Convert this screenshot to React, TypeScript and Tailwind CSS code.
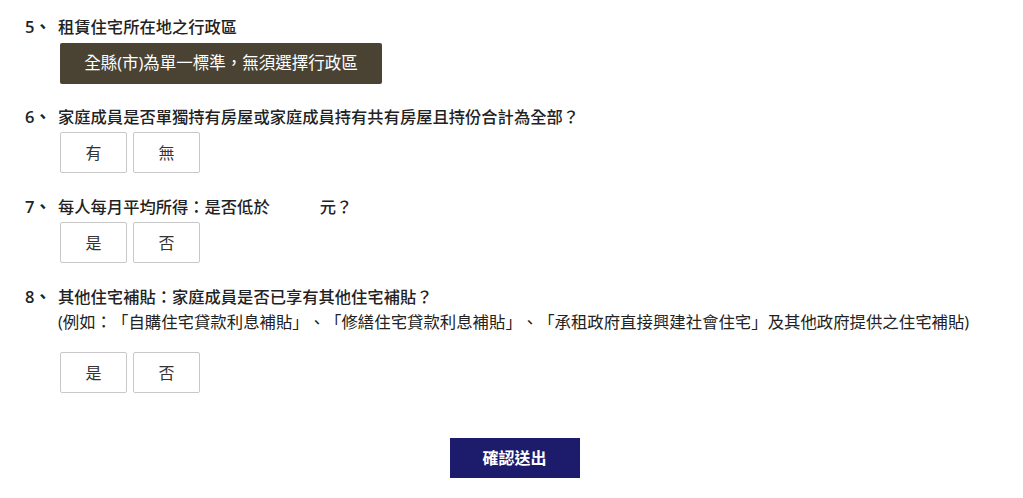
import React from 'react';

const font = "font-['Open_Sans','Noto_Sans_CJK_TC',sans-serif] [text-spacing-trim:space-all]";

const Choice = ({ label }: { label: string }) => (
  <button
    type="button"
    className="w-[67px] h-[41px] bg-white border border-[#c8c8c8] rounded-[2px] text-[16px] text-[#333] flex items-center justify-center"
  >
    {label}
  </button>
);

const Question = ({ no, children }: { no: number; children: React.ReactNode }) => (
  <div className="flex">
    <div className="w-[33px] h-[22px] leading-[22px] text-[16.5px] font-semibold text-[#222] shrink-0">{no}、</div>
    <div className="flex-1">{children}</div>
  </div>
);

export default function App() {
  return (
    <div className={`${font} bg-white w-[1023px] h-[498px] pl-[25px] pt-[16px] text-[#222]`}>
      {/* Q5 */}
      <Question no={5}>
        <div className="h-[22px] leading-[22px] text-[16.3px] font-medium">租賃住宅所在地之行政區</div>
        <div className="mt-[5px] ml-[2px] w-[322px] h-[41px] bg-[#4a4333] rounded-[2px] text-white text-[16.5px] flex items-center justify-center">
          全縣(市)為單一標準，無須選擇行政區
        </div>
      </Question>

      {/* Q6 */}
      <div className="mt-[22px]">
        <Question no={6}>
          <div className="h-[22px] leading-[22px] text-[16.3px] font-medium">家庭成員是否單獨持有房屋或家庭成員持有共有房屋且持份合計為全部？</div>
          <div className="mt-[4px] ml-[2px] flex gap-[6px]">
            <Choice label="有" />
            <Choice label="無" />
          </div>
        </Question>
      </div>

      {/* Q7 */}
      <div className="mt-[23px]">
        <Question no={7}>
          <div className="h-[22px] leading-[22px] text-[16.3px] font-medium flex">
            <span>每人每月平均所得：是否低於</span>
            <span className="w-[50px]" />
            <span>元？</span>
          </div>
          <div className="mt-[4px] ml-[2px] flex gap-[6px]">
            <Choice label="是" />
            <Choice label="否" />
          </div>
        </Question>
      </div>

      {/* Q8 */}
      <div className="mt-[23px]">
        <Question no={8}>
          <div className="h-[22px] leading-[22px] text-[16.3px] font-medium">其他住宅補貼：家庭成員是否已享有其他住宅補貼？</div>
          <div className="mt-[3px] h-[22px] leading-[22px] text-[16.4px] whitespace-nowrap">
            (例如：「自購住宅貸款利息補貼」、「修繕住宅貸款利息補貼」、「承租政府直接興建社會住宅」及其他政府提供之住宅補貼)
          </div>
          <div className="mt-[19px] ml-[2px] flex gap-[6px]">
            <Choice label="是" />
            <Choice label="否" />
          </div>
        </Question>
      </div>

      {/* Submit */}
      <div className="mt-[45px] flex justify-center pr-[25px]">
        <button
          type="button"
          className="w-[130px] h-[40px] bg-[#1c1b6c] text-white text-[16px] font-bold ml-[6px]"
        >
          確認送出
        </button>
      </div>
    </div>
  );
}
